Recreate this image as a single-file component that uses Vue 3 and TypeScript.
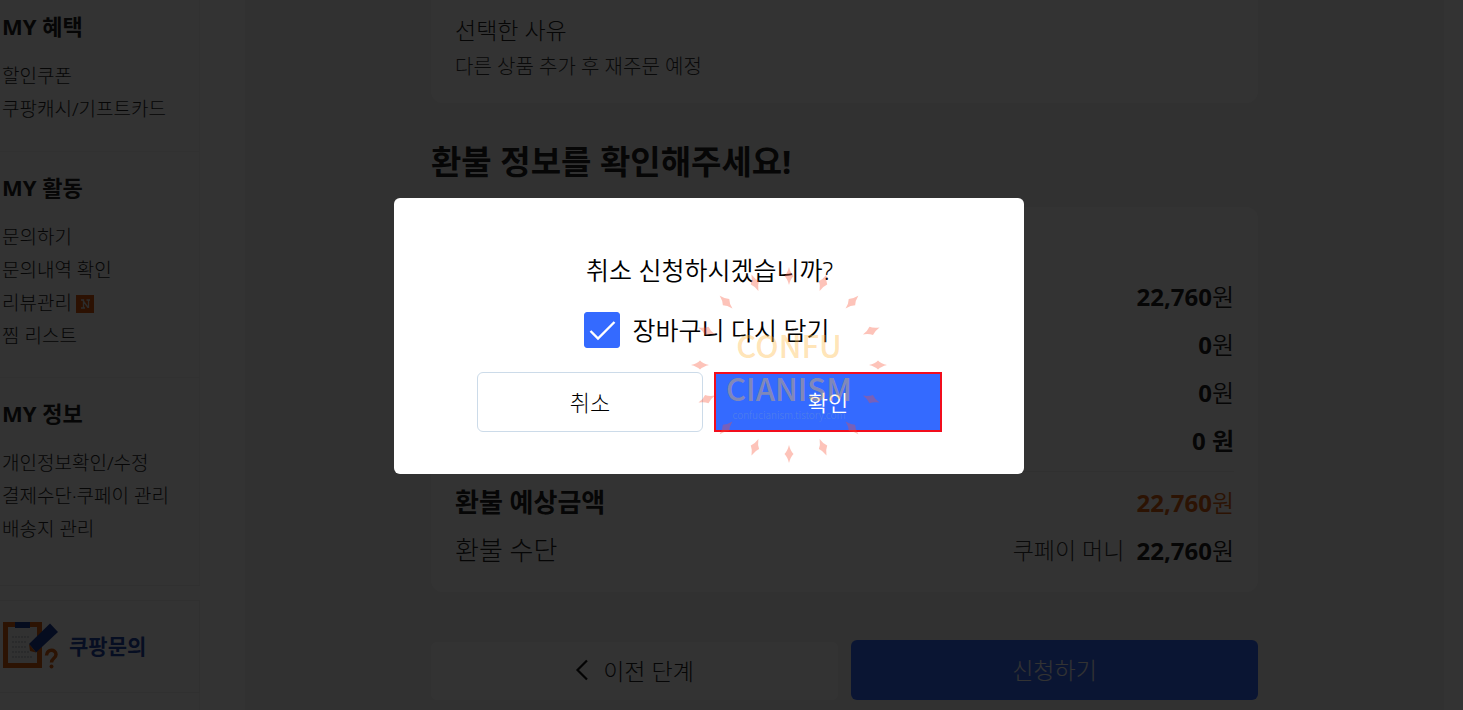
<script setup lang="ts">
import { ref } from 'vue'

interface MenuItem { label: string; isNew?: boolean }
interface MenuSection { title: string; items: MenuItem[] }

const menu: MenuSection[] = [
  { title: 'MY 혜택', items: [{ label: '할인쿠폰' }, { label: '쿠팡캐시/기프트카드' }] },
  {
    title: 'MY 활동',
    items: [
      { label: '문의하기' },
      { label: '문의내역 확인' },
      { label: '리뷰관리', isNew: true },
      { label: '찜 리스트' },
    ],
  },
  {
    title: 'MY 정보',
    items: [{ label: '개인정보확인/수정' }, { label: '결제수단·쿠페이 관리' }, { label: '배송지 관리' }],
  },
]

const amounts: string[] = ['22,760', '0', '0']
const refillCart = ref(true)
const sparkAngles = Array.from({ length: 16 }, (_, i) => i * 22.5)
</script>

<template>
  <div class="page">
    <nav class="sidebar">
      <div class="menu">
        <section v-for="s in menu" :key="s.title" class="menu-section">
          <h3>{{ s.title }}</h3>
          <ul>
            <li v-for="item in s.items" :key="item.label">
              <a href="#">{{ item.label }}</a>
              <svg v-if="item.isNew" class="new" viewBox="0 0 18 18">
                <rect width="18" height="18" fill="#d9540b" />
                <path d="M5 5H7.500V13M5 13H9M7 5.500L12 12.500M12.500 13V5M10.500 5H14" fill="none" stroke="#ddd" stroke-width="1.300" />
              </svg>
            </li>
          </ul>
        </section>
      </div>
      <a href="#" class="inquiry">
        <svg class="clipboard" viewBox="0 0 56 50">
          <rect x="0" y="2" width="39" height="46" fill="#d9600f" />
          <rect x="5" y="7" width="29" height="36" fill="#f4f4f4" />
          <rect x="12" y="2" width="15" height="6" fill="#1c3c94" />
          <path d="M9 17h18M9 22h15M9 27h15M9 32h18M9 37h20" stroke="#a9adb8" stroke-width="1" stroke-dasharray="2 1" />
          <path d="M26 24L47 3.500L55 12L33 32.500Z" fill="#1d3f9c" />
          <path d="M26 24L33 32.500L27 31Z" fill="#d9600f" />
          <path d="M43.500 35.500C44 28.500 53 29 53 34.500C53 38.500 48.500 38 48.500 42.500" fill="none" stroke="#d9600f" stroke-width="3.500" />
          <circle cx="48.500" cy="46.500" r="2" fill="#d9600f" />
        </svg>
        <span>쿠팡문의</span>
      </a>
      <div class="next-box"></div>
    </nav>

    <main class="content">
      <div class="column">
        <section class="card reason">
          <p class="reason-title">선택한 사유</p>
          <p class="reason-text">다른 상품 추가 후 재주문 예정</p>
        </section>
        <h2>환불 정보를 확인해주세요!</h2>
        <section class="card refund">
          <div v-for="(a, i) in amounts" :key="i" class="row end">
            <span class="amount"><b>{{ a }}</b>원</span>
          </div>
          <div class="row end"><b class="amount">0 원</b></div>
          <div class="row total">
            <b class="label">환불 예상금액</b>
            <span class="amount accent"><b>22,760</b>원</span>
          </div>
          <div class="row">
            <span class="label">환불 수단</span>
            <span class="pay"><span class="method">쿠페이 머니</span><span class="amount"><b>22,760</b>원</span></span>
          </div>
        </section>
        <div class="steps">
          <button type="button" class="prev">
            <svg viewBox="0 0 14 22"><path d="M12 1.500L2.500 11L12 20.500" fill="none" stroke="#111" stroke-width="2.200" /></svg>
            <span>이전 단계</span>
          </button>
          <button type="button" class="apply">신청하기</button>
        </div>
      </div>
    </main>
  </div>

  <div class="overlay">
    <div class="dialog" role="dialog" aria-modal="true">
      <p class="question">취소 신청하시겠습니까?</p>
      <label class="check">
        <input v-model="refillCart" type="checkbox" />
        <svg v-if="refillCart" class="tick" viewBox="0 0 36 36"><path d="M6.500 19L14 26.500L30.500 10" fill="none" stroke="#fff" stroke-width="2.400" /></svg>
        <span>장바구니 다시 담기</span>
      </label>
      <div class="actions">
        <button type="button" class="cancel">취소</button>
        <button type="button" class="confirm">확인</button>
      </div>
      <div class="watermark">
        <svg class="sparks" viewBox="-100 -100 200 200">
          <path v-for="a in sparkAngles" :key="a" :transform="`rotate(${a})`" d="M0 -98Q1.500 -92 4.500 -89Q1.500 -86 0 -80Q-1.500 -86 -4.500 -89Q-1.500 -92 0 -98Z" />
        </svg>
        <span class="mark">CONFU</span>
        <span class="mark">CIANISM</span>
        <span class="site">confucianism.tistory.com</span>
      </div>
    </div>
  </div>
</template>

<style>
html, body, #app { height: 100%; }
body { margin: 0; overflow: hidden; }
</style>

<style scoped>
* { box-sizing: border-box; }
.page, .overlay { font-family: "Noto Sans", "Noto Sans CJK KR", sans-serif; font-weight: 300; color: #222; }
h2, h3, p, ul { margin: 0; padding: 0; }
h2, h3, b { font-weight: 700; }
ul { list-style: none; }
a { color: inherit; text-decoration: none; }
button { font: inherit; padding: 0; cursor: pointer; }

.page { display: flex; gap: 45px; height: 100%; padding-right: 19px; overflow: hidden; background: #fff; }
.sidebar { flex: none; width: 200px; display: flex; flex-direction: column; }
.menu { border-right: 1px solid #f2f2f2; border-bottom: 1px solid #eee; padding-bottom: 15px; background: #fcfcfc; }
.menu-section { padding: 19px 0 24px 2px; border-top: 1px solid #f2f2f2; }
.menu-section:first-child { padding: 10px 0 25px 2px; border-top: 0; }
h3 { font-size: 22px; line-height: 32px; margin-bottom: 18px; }
li { display: flex; align-items: center; gap: 4px; font-size: 19px; line-height: 33px; }
.new { width: 18px; height: 18px; }
.inquiry { display: flex; align-items: center; gap: 10px; height: 93px; margin-top: 14px; padding: 0 0 4px 3px; border: 1px solid #eee; border-left: 0; color: #1f45a8; font-size: 21px; font-weight: 700; }
.clipboard { width: 56px; height: 50px; }
.next-box { flex: 1; border-right: 1px solid #f2f2f2; }

.content { flex: 1; display: flex; justify-content: center; background: #f5f5f5; }
.column { width: 100%; max-width: 827px; }
.card { background: #fff; border-radius: 0 0 12px 12px; padding: 12px 24px 18px; }
.reason-title { font-size: 23px; line-height: 37px; }
.reason-text { font-size: 20px; line-height: 36px; color: #333; }
h2 { font-size: 33px; line-height: 40px; margin: 39px 0 25px; }
.refund { border-radius: 12px; padding: 64px 24px 19px; }
.row { display: flex; align-items: center; justify-content: space-between; height: 48px; font-size: 26px; }
.end { justify-content: flex-end; }
.total { margin-top: 8px; border-top: 1px solid #eee; height: 54px; padding-top: 5px; }
.amount { font-size: 24px; font-weight: 350; }
b.amount { font-weight: 700; }
.accent { color: #d9600f; }
.pay { display: flex; align-items: center; gap: 12px; }
.method { font-size: 23px; color: #333; }
.steps { display: flex; align-items: flex-end; gap: 13px; margin-top: 48px; }
.steps button { flex: 1; border: 0; border-radius: 6px; font-size: 23px; padding-bottom: 3px; }
.steps .prev { height: 58px; display: flex; align-items: center; justify-content: center; gap: 14px; background: #fff; color: #222; }
.prev svg { width: 14px; height: 22px; }
.steps .apply { height: 60px; background: #346aff; color: #fff; }

.overlay { position: fixed; inset: 0; display: flex; align-items: center; justify-content: center; padding: 0 45px 38px 0; background: rgba(0, 0, 0, 0.8); color: #000; }
.dialog { position: relative; width: 630px; display: flex; flex-direction: column; align-items: center; gap: 24px; padding: 54px 82px 42px 83px; border-radius: 6px; background: #fff; }
.question { font-size: 25px; line-height: 36px; font-weight: 350; }
.check { position: relative; display: flex; align-items: center; gap: 13px; width: 252px; height: 36px; font-size: 25px; font-weight: 350; line-height: 36px; white-space: nowrap; }
.check input { flex: none; appearance: none; width: 36px; height: 36px; margin: 0; border: 1px solid #346aff; border-radius: 3px; background: #fff; }
.check input:checked { background: #346aff; }
.tick { position: absolute; left: 0; top: 0; width: 36px; height: 36px; pointer-events: none; }
.actions { display: flex; gap: 11px; width: 100%; }
.actions button { flex: 1; height: 60px; padding-bottom: 3px; font-size: 22px; }
.cancel { border: 1px solid #ccdbe9; border-radius: 6px; background: #fff; color: #000; }
.actions .confirm { border: 2px solid #f20d1c; background: #346aff; color: #fff; font-weight: 350; }

.watermark { position: absolute; left: 295px; top: 67px; width: 200px; height: 200px; display: flex; flex-direction: column; align-items: center; padding-top: 58px; pointer-events: none; font-family: "Noto Sans CJK KR", sans-serif; }
.sparks { position: absolute; inset: 0; fill: rgba(250, 80, 50, 0.34); }
.mark { font-size: 31px; line-height: 43px; font-weight: 500; color: rgba(255, 186, 70, 0.4); }
.site { font-size: 10px; line-height: 12px; color: rgba(140, 170, 190, 0.35); }
</style>
